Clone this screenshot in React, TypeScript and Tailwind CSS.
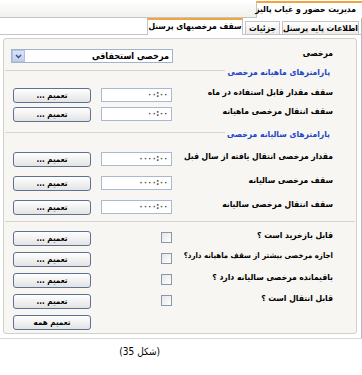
import React from "react";

const Btn = ({ label }: { label: string }) => (
  <div
    dir="rtl"
    className="w-[78px] h-[15px] shrink-0 rounded-[3px] border border-[#5d7190] bg-gradient-to-b from-white to-[#e3e3e3] flex items-center justify-center text-[8px] font-bold text-black leading-none whitespace-nowrap"
  >
    {label}
  </div>
);

const Inp = ({ value }: { value: string }) => (
  <div
    dir="ltr"
    className="w-[71px] h-[14px] shrink-0 border border-[#a9b9cf] bg-white flex items-center justify-end pr-[3px] text-[8px] font-bold text-[#3a3a3a] leading-none"
  >
    {value}
  </div>
);

const Chk = () => (
  <div className="w-[11px] h-[11px] shrink-0 border border-[#8797ad] bg-gradient-to-br from-[#e6e6e6] to-white mt-[1px]" />
);

const Label = ({ text, small }: { text: string; small?: boolean }) => (
  <div
    dir="rtl"
    className={
      small
        ? "flex-1 text-right pr-[23px] text-[7.8px] font-bold text-black leading-none whitespace-nowrap"
        : "flex-1 text-right pr-[23px] text-[8.5px] font-bold text-black leading-none whitespace-nowrap"
    }
  >
    {text}
  </div>
);

const InputRow = ({ label, value, mt }: { label: string; value: string; mt: string }) => (
  <div className={`flex items-start h-[15px] pl-[9px] ${mt}`}>
    <Btn label="تعمیم ..." />
    <div className="ml-[10px]">
      <Inp value={value} />
    </div>
    <Label text={label} />
  </div>
);

const CheckRow = ({ label, mt, small }: { label: string; mt: string; small?: boolean }) => (
  <div className={`flex items-start h-[15px] pl-[9px] ${mt}`}>
    <Btn label="تعمیم ..." />
    <div className="ml-[70px]">
      <Chk />
    </div>
    <Label text={label} small={small} />
  </div>
);

const Header = ({ text, mt }: { text: string; mt: string }) => (
  <div className={`flex items-start h-[11px] ${mt}`}>
    <div className="flex-1 h-px bg-[#d4d4d0] mt-[2px] ml-[1px] mr-[2px]" />
    <div dir="rtl" className="pr-[26px] text-[8.5px] font-bold text-[#2347c9] leading-none whitespace-nowrap">
      {text}
    </div>
  </div>
);

export default function App() {
  return (
    <div className="w-[362px] h-[375px] bg-white overflow-hidden font-['DejaVu_Sans_Condensed','DejaVu_Sans',sans-serif] relative">
      {/* top band */}
      <div className="h-[18px] flex justify-end items-end bg-gradient-to-b from-white to-[#f1f1ef] border-b border-[#c4c4c4]">
        <div
          dir="rtl"
          className="relative -mb-px h-[17px] w-[106px] border-t-2 border-t-[#f3a43b] border-l border-[#c4c4c4] bg-white text-right pr-[6px] text-[8.5px] font-bold text-black leading-[13px] whitespace-nowrap"
        >
          مدیریت حضور و غیاب پالیز
        </div>
      </div>
      {/* second band tabs */}
      <div className="h-[17px] flex justify-end items-end border-b border-[#c4c4c4] pr-[2px] border-r border-r-[#b8b8b8]">
        <div
          dir="rtl"
          className="relative -mb-px h-[17px] w-[96px] border-t-2 border-t-[#f3a43b] border-x border-[#c4c4c4] bg-white text-center text-[8.5px] font-bold text-black leading-[13px] whitespace-nowrap"
        >
          سقف مرخصیهای پرسنل
        </div>
        <div
          dir="rtl"
          className="ml-[2px] h-[13px] w-[35px] border border-b-0 border-[#c4c4c4] bg-gradient-to-b from-white to-[#ebebe8] text-center text-[8.5px] font-bold text-black leading-[12px] whitespace-nowrap"
        >
          جزئیات
        </div>
        <div
          dir="rtl"
          className="ml-[2px] h-[13px] w-[77px] border border-b-0 border-[#c4c4c4] bg-gradient-to-b from-white to-[#ebebe8] text-center text-[8.5px] font-bold text-black leading-[12px] whitespace-nowrap"
        >
          اطلاعات پایه پرسنل
        </div>
      </div>
      {/* content */}
      <div className="h-[304px] pt-[3px] pl-[3px] pr-[3px] border-r border-[#b8b8b8] border-b border-b-[#d8d8d8]">
        <div className="h-[296px] w-[354px] rounded-[3px] border border-[#cfcfcb] bg-[#f7f6f2] flex flex-col">
          {/* select row */}
          <div className="flex items-start h-[14px] mt-[10px] pl-[7px]">
            <div className="w-[162px] h-[14px] border border-[#a3b3c9] bg-white flex items-center">
              <div className="w-[13px] h-[12px] bg-gradient-to-b from-[#d9e3f7] to-[#bfcdee] border border-[#b3c3e3] flex items-center justify-center">
                <svg width="7" height="5" viewBox="0 0 7 5">
                  <path d="M1 1 L3.5 3.5 L6 1" stroke="#3b4f85" strokeWidth="1.4" fill="none" />
                </svg>
              </div>
              <div dir="rtl" className="flex-1 text-right pr-[3px] text-[9px] font-bold text-black leading-none whitespace-nowrap">
                مرخصی استحقاقی
              </div>
            </div>
            <Label text="مرخصی" />
          </div>
          <Header text="پارامترهای ماهیانه مرخصی" mt="mt-[5px]" />
          <InputRow label="سقف مقدار قابل استفاده در ماه" value="۰۰:۰۰" mt="mt-[9px]" />
          <InputRow label="سقف انتقال مرخصی ماهیانه" value="۰۰:۰۰" mt="mt-[4px]" />
          <Header text="پارامترهای سالیانه مرخصی" mt="mt-[8px]" />
          <InputRow label="مقدار مرخصی انتقال یافته از سال قبل" value="۰۰۰۰:۰۰" mt="mt-[11px]" />
          <InputRow label="سقف مرخصی سالیانه" value="۰۰۰۰:۰۰" mt="mt-[9px]" />
          <InputRow label="سقف انتقال مرخصی سالیانه" value="۰۰۰۰:۰۰" mt="mt-[9px]" />
          <div className="h-px bg-[#d4d4d0] mt-[6px] mx-[1px]" />
          <CheckRow label="قابل بازخرید است ؟" mt="mt-[9px]" />
          <CheckRow label="اجازه مرخصی بیشتر از سقف ماهیانه دارد؟" mt="mt-[6px]" small />
          <CheckRow label="باقیمانده مرخصی سالیانه دارد ؟" mt="mt-[6px]" />
          <CheckRow label="قابل انتقال است ؟" mt="mt-[6px]" />
          <div className="flex items-start h-[15px] pl-[9px] mt-[6px]">
            <Btn label="تعمیم همه" />
          </div>
        </div>
      </div>
      <div dir="rtl" className="mt-[8px] text-right pr-[202px] text-[10px] text-black leading-none">
        (شکل 35)
      </div>
    </div>
  );
}
